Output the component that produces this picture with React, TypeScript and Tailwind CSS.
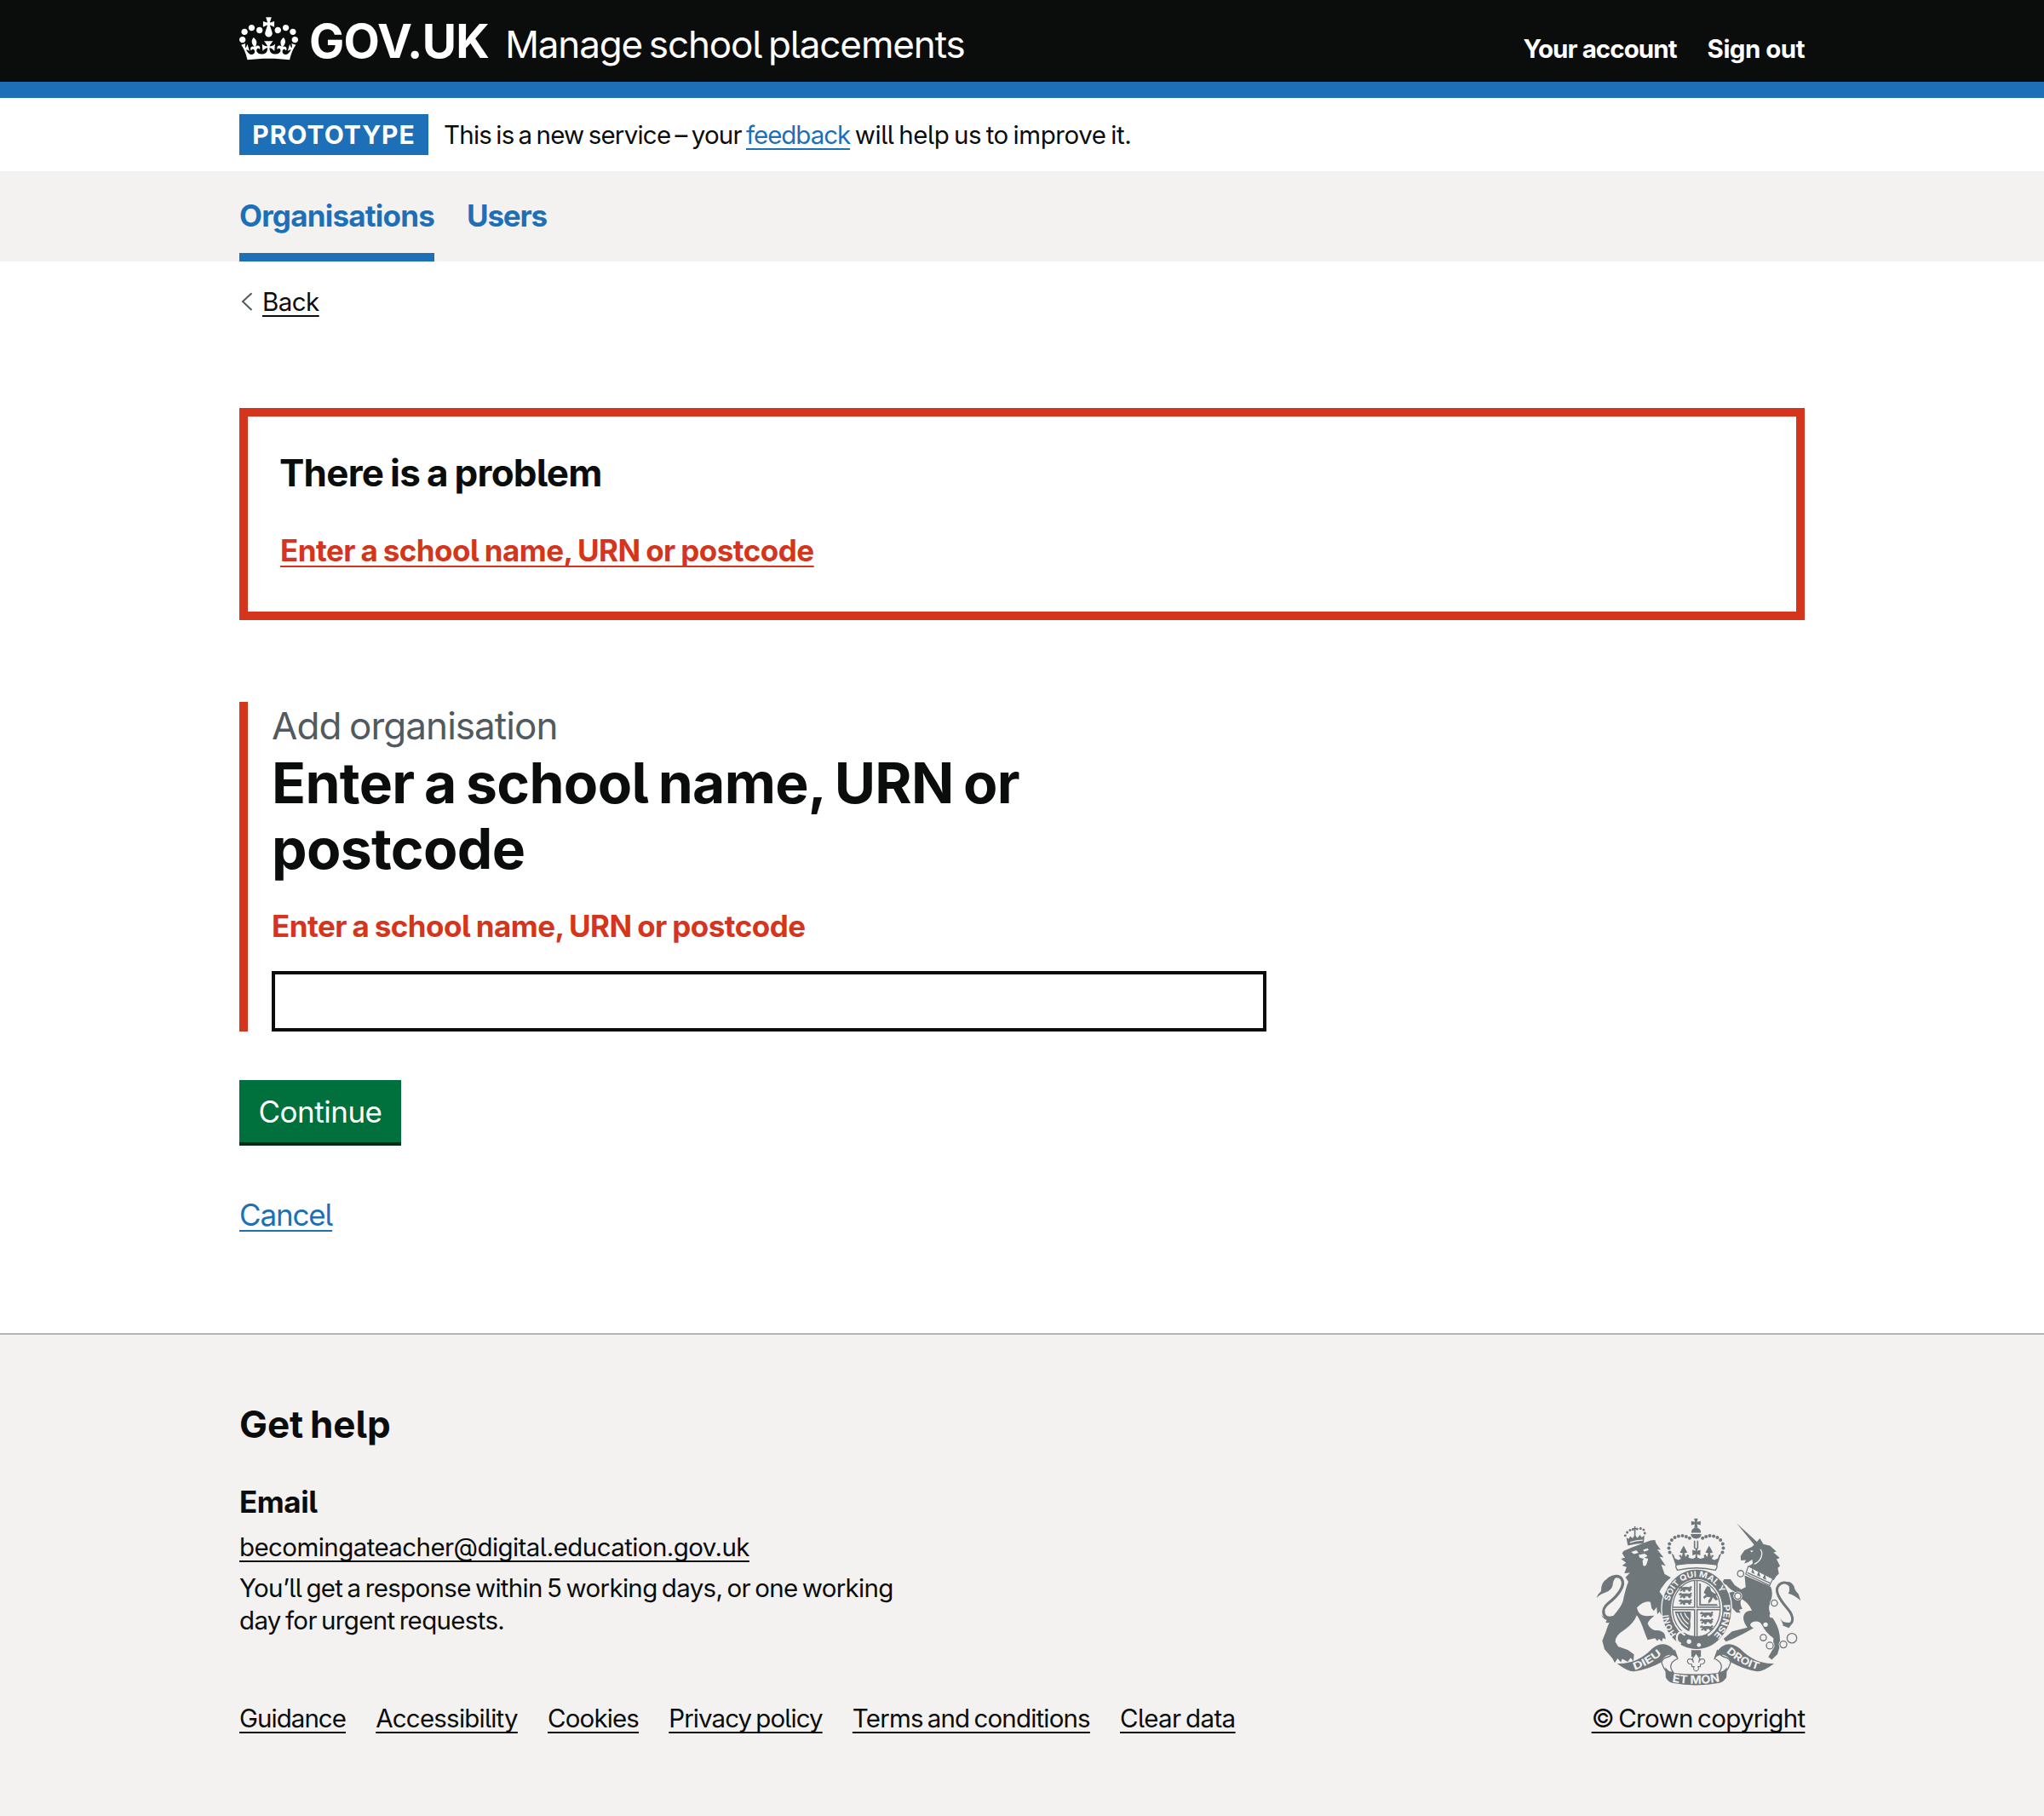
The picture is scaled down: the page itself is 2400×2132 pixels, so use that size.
const linkLine = "underline decoration-2 underline-offset-[5px] [text-decoration-skip-ink:none]";

function Crown() {
  return (
    <svg viewBox="0 0 132 97" className="h-[51px] w-[69px] shrink-0" fill="currentColor" aria-hidden="true">
      <path
        fillRule="evenodd"
        d="M25 30.2c3.5 1.5 7.7-.2 9.1-3.7 1.5-3.6-.2-7.8-3.9-9.2-3.6-1.4-7.6.3-9.1 3.9-1.4 3.5.3 7.5 3.9 9zM9 39.5c3.6 1.5 7.8-.2 9.2-3.7 1.5-3.6-.2-7.8-3.9-9.1-3.6-1.5-7.6.2-9.1 3.8-1.4 3.5.3 7.5 3.8 9zM4.4 57.2c3.5 1.5 7.7-.2 9.1-3.8 1.5-3.6-.2-7.7-3.9-9.1-3.5-1.5-7.6.3-9.1 3.8-1.4 3.5.3 7.6 3.9 9.1zm38.3-21.4c3.5 1.5 7.7-.2 9.1-3.8 1.5-3.6-.2-7.7-3.9-9.1-3.6-1.5-7.6.3-9.1 3.8-1.3 3.6.4 7.7 3.9 9.1zm64.4-5.6c-3.6 1.5-7.8-.2-9.1-3.7-1.5-3.6.2-7.8 3.8-9.2 3.6-1.4 7.7.3 9.2 3.9 1.3 3.5-.4 7.5-3.9 9zm15.9 9.3c-3.6 1.5-7.7-.2-9.1-3.7-1.5-3.6.2-7.8 3.7-9.1 3.6-1.5 7.7.2 9.2 3.8 1.5 3.5-.3 7.5-3.8 9zm4.7 17.7c-3.6 1.5-7.8-.2-9.2-3.8-1.5-3.6.2-7.7 3.9-9.1 3.6-1.5 7.7.3 9.2 3.8 1.3 3.5-.4 7.6-3.9 9.1zM89.3 35.8c-3.6 1.5-7.8-.2-9.2-3.8-1.4-3.6.2-7.7 3.9-9.1 3.6-1.5 7.7.3 9.2 3.8 1.4 3.6-.3 7.7-3.9 9.1zM69.7 17.7l8.9 4.7V9.3l-8.9 2.8c-.2-.3-.5-.6-.9-.9L72.4 0H59.6l3.5 11.2c-.3.3-.6.5-.9.9l-8.8-2.8v13.1l8.8-4.7c.3.3.6.7.9.9l-5 15.4v.1c-.2.8-.4 1.6-.4 2.4 0 4.1 3.1 7.5 7 8.1h.2c.3 0 .7.1 1 .1.4 0 .7 0 1-.1h.2c4-.6 7.1-4.1 7.1-8.1 0-.8-.1-1.7-.4-2.4V34l-5.1-15.4c.4-.2.7-.6 1-.9zM66 92.8c16.9 0 32.8 1.1 47.1 3.2 4-16.9 8.9-26.7 14-33.5l-9.6-3.4c1 4.9 1.1 7.2 0 10.2-1.5-1.4-3-4.3-4.2-8.7L108.6 76c2.8-2 5-3.2 7.5-3.3-4.4 9.4-10 11.9-13.6 11.2-4.3-.8-6.3-4.6-5.6-7.9 1-4.7 5.7-5.9 8-.5 4.3-8.7-3-11.4-7.6-8.8 7.1-7.2 7.9-13.5 2.1-21.1-8 6.1-8.1 12.3-4.5 20.8-4.7-5.4-12.1-2.5-9.5 6.2 3.4-5.2 7.9-2 7.2 3.1-.6 4.3-6.4 7.8-13.5 7.2-10.3-.9-10.9-8-11.2-13.8 2.5-.5 7.1 1.8 11 7.3L80.2 60c-4.1 4.4-8 5.3-12.3 5.4 1.4-4.4 8-11.6 8-11.6H55.5s6.4 7.2 7.9 11.6c-4.2-.1-8-1-12.3-5.4l1.4 16.4c3.9-5.5 8.5-7.7 10.9-7.3-.3 5.8-.9 12.8-11.1 13.8-7.2.6-12.9-2.9-13.5-7.2-.7-5 3.8-8.3 7.1-3.1 2.7-8.7-4.6-11.6-9.4-6.2 3.7-8.5 3.6-14.7-4.6-20.8-5.8 7.6-5 13.9 2.2 21.1-4.7-2.6-11.9.1-7.7 8.8 2.3-5.5 7.1-4.2 8.1.5.7 3.3-1.3 7.1-5.7 7.9-3.5.7-9-1.8-13.5-11.2 2.5.1 4.7 1.3 7.5 3.3l-4.7-15.4c-1.2 4.4-2.7 7.2-4.3 8.7-1.1-3-.9-5.3 0-10.2l-9.5 3.4c5 6.9 9.9 16.7 14 33.5 14.8-2.1 30.8-3.2 47.7-3.2z"
      />
    </svg>
  );
}

const G = "#6f777b";
const L = "#f3f2f1";

const leftPearls = [
  [300, 157], [297, 142], [299, 127], [307, 114], [318, 105], [331, 100], [345, 99], [358, 102], [370, 107],
];

function LittleLion({ x, y }: { x: number; y: number }) {
  return (
    <path
      transform={`translate(${x} ${y})`}
      stroke={G}
      strokeWidth="2.5"
      d="M0 4l6-4 7 3 12-1 12 1 6-4 3 3-4 4 3 5-6-1 2 6h-6l-3-6-11 1 1 6h-6l-2-6-6 5-4-2 5-5-1-4-5 2z"
    />
  );
}

function RoyalArms() {
  return (
    <svg viewBox="40 36 724 594" className="h-[198px] w-[241px] [word-spacing:0]" fill={G} aria-hidden="true">
      <defs>
        <path id="motto-top" d="M299 334A98.2 114 0 0 1 491 334" />
        <path id="motto-right" d="M489 342A95 114 0 0 1 446 458" />
        <path id="motto-left" d="M324 446A97 116 0 0 1 296 374" />
        <path id="scroll-left" d="M176 572Q230 556 281 510" />
        <path id="scroll-right" d="M499 509Q549 555 617 573" />
        <path id="scroll-mid" d="M300 612Q393 630 488 611" />
      </defs>

      {/* left supporter */}
      <path d="M152 133l-5-28 8 5 6-10 8 8 8-12 9 10 9-10 6 8 10-6-3 27q-30 2-56 8z" />
      <path d="M160 122q22-7 45-8" stroke={L} strokeWidth="4" fill="none" />
      <path d="M177 66v34M170 74h14" stroke={G} strokeWidth="5" fill="none" />
      {[[143, 98], [150, 87], [160, 79], [170, 76], [185, 75], [197, 73], [208, 78], [212, 90]].map(([x, y]) => (
        <circle key={x} cx={x} cy={y} r="4.5" />
      ))}
      <path d="M138 152l28-12 66-25 16-1 4 12 16 22-12-1 22 28-14-2 22 32-16-5 12 34 22 12-16 14-18 24-6 12 24 34 12 44-10 8-14-16-4 16-8-16-8 10-2-26-10 14-8-10-4-22q-22-6-48 20 6 30 34 30l28-2q-22 18-24 28 8 20 26 24 26-2 34 14l4 18-10-5-4 13-10-10-6 8-8-10-26 6-10-25q-14-42-28-62-12 30-42 50-36 22-34 44l10 16 34 12 22 16-2 24-10-12-10 14-20-10-4 12-12-14-10 16-8-16-28-32-8-30 12-30q12-44 40-74 22-26 24-50 8-34 16-54l-10-16 16-16-20 2 8-22-16-5 14-10-18-14 14-4-10-16z" />
      <path d="M164 156l18-6 8 9-16 4zM206 148l16-5 4 6-16 6zM190 166l22-4 10 8-12 6 14 4-4 14q-6 18-14 8l-2-14 4-8-14-4z" fill={L} />
      <path d="M108 386C62 398 54 360 84 336C116 312 146 274 130 250C120 236 96 240 82 254" fill="none" stroke={G} strokeWidth="10" />
      <path d="M42 318q4-14 16-24-2-30 22-44 16-12 38-9-16 8-18 24 0 26-28 34-16 4-30 19zM58 376q8 14 24 10 12-4 24-6l-4 16q-12 14-28 8l4-8q-14-4-20-20z" />

      {/* right supporter */}
      <path d="M536 54l76 70-12 9z" />
      <path d="M550 170l14-20 26-12 14-14 14-16 12 20 24 6 22 20-10 3 22 20-11 4 12 24-8 7 4 20-10 10-8 14-92-48 18-12-2-14-14 10-14 4 6-12-18 2z" />
      <path d="M620 146q12 18-4 40-12 12-18 12" fill="none" stroke={L} strokeWidth="4" />
      <path d="M584 150l12 2-8 5z" fill={L} />
      <path d="M577 206l-9 28 84 40 12-24z" fill={L} stroke={G} strokeWidth="3.5" />
      <path d="M588 228l4-14 8 20zM608 238l6-16 6 22zM628 248l8-16 4 22z" />
      <path d="M574 229l80 37" stroke={G} strokeWidth="4" />
      <path d="M564 238l92 40q12 24-4 64-8 22 16 54 26 40 20 94l-8 26-20 20-12-10 16-28 2-38q-28-20-40-46-12-20-36-10-14 10 6 20l-36 20-40 20-22 8-8-10 30-26 54-14q-16-20-14-38 4-22 30-22-12-26-36-40-10 12 2 34l-12 4 6 10-14 0-30-32-10-34 26-8 18 6q-30-14-40-30l-16-6 8-14 22 0 16 22 22 14 16-8z" />
      <path d="M700 412C742 418 740 384 716 356C688 324 664 288 688 270C706 256 726 270 732 284" fill="none" stroke={G} strokeWidth="9" />
      <path d="M706 262q22-6 32 14 4 18 16 28l8 24q-20-20-44-26 6-6 4-18 0-12-16-22zM688 386q8 18 22 18l24 2-14 18-18-8z" />
      {[[550, 232, 11], [540, 311, 11], [669, 336, 11], [630, 458, 11], [653, 486, 12], [701, 482, 12], [731, 460, 17]].map(
        ([x, y, r]) => (
          <g key={x} fill={L}>
            <circle cx={x} cy={y} r={r} stroke={L} strokeWidth="9" />
            <circle cx={x} cy={y} r={r} stroke={G} strokeWidth="4" />
          </g>
        ),
      )}
      <circle cx="660" cy="380" r="8" fill={L} />
      <circle cx="638" cy="412" r="8" fill={L} />

      {/* crown */}
      <path d="M386 38h13l-3 12 13-3v14l-13-3 3 12h-13l3-12-13 3V47l13 3zM376 88q0-16 17-18 17 2 17 18z" />
      <path d="M374 93h38q-2 16-19 16t-19-16zM385 116h5v28h-5zM396 116h5v28h-5z" />
      {leftPearls.map(([x, y]) => (
        <g key={`${x}-${y}`}>
          <circle cx={x} cy={y} r="6" />
          <circle cx={786 - x} cy={y} r="6" />
        </g>
      ))}
      <path d="M306 160l8 6 4 12 12 6 10-4-8-12 8-2 2 8 4-14-10-2 8-16 5-8 5 8 8 16-10 2 4 14 6-10 6 4-2 8 14 4 10-4 2-12-12 4v-20l12 4-4-10h12l-4 10 12-4v20l-12-4 2 12 10 4 14-4-2-8 6-4 6 10 4-14-10-2 8-16 5-8 5 8 8 16-10 2 4 14 2-8 8 2-8 12 10 4 12-6 4-12 8-6-16 48H323z" />

      {/* garter */}
      <ellipse cx="395" cy="358" rx="124" ry="142" stroke={L} strokeWidth="4" />
      <ellipse cx="395" cy="358" rx="91" ry="107" fill={L} />
      <ellipse cx="394" cy="356" rx="84" ry="100" fill="none" stroke={G} strokeWidth="4" />
      <path d="M322 210q-3-8 8-10 64-8 130 0 10 3 6 11l-5 9q-66-16-134 0z" fill={L} stroke={G} strokeWidth="4" />
      <g fill={G}>
        {[278, 301, 324].map((y) => (
          <LittleLion key={y} x={332} y={y} />
        ))}
        {[368, 392, 416].map((y) => (
          <LittleLion key={y} x={407} y={y} />
        ))}
        <path d="M404 266l6 2v72h56l4 6h-66zM424 290l8-14 10 4 4 14 12 8 10 0-4 10 6 12-8 2-10-10-6 14-10 8 0-10 8-12-14-2-8 8-4-8 10-8-8-6z" />
        <path d="M318 366l56 0q2 20-2 34 4 20-4 36-36-16-50-70z" />
        <path d="M326 372q10 30 38 52M338 370q6 24 28 40M352 370q4 14 16 24" stroke={L} strokeWidth="4" fill="none" />
      </g>
      <path d="M311 355h166M392 257v198" stroke={G} strokeWidth="13" />
      <path d="M311 355h166M392 257v198" stroke={L} strokeWidth="4" />
      <g fill={L} fontFamily="Inter, sans-serif" fontWeight="700" fontSize="31">
        <text fontSize="29"><textPath href="#motto-top" startOffset="4" textLength="246" lengthAdjust="spacingAndGlyphs">SOIT QUI MAL Y</textPath></text>
        <text><textPath href="#motto-right" textLength="118" lengthAdjust="spacingAndGlyphs">PENSE</textPath></text>
        <text><textPath href="#motto-left" textLength="76" lengthAdjust="spacingAndGlyphs">HONI</textPath></text>
      </g>
      <path d="M352 438q-18-4-26 12-6 22 14 30" fill="none" stroke={L} strokeWidth="7" />
      <path d="M356 446q40 14 76 0l10 22q-46 22-100 4z" />
      <circle cx="368" cy="472" r="8" fill={L} />
      <circle cx="403" cy="484" r="7" fill={L} />

      {/* scroll */}
      <path d="M272 548q-2-16 22-22 14-4 24-22l10 28q-22 10-24 24-2 12 8 24h-22q-12-12-18-32zM514 548q2-16-22-22-14-4-24-22l-10 28q22 10 24 24 2 12-8 24h22q12-12 18-32z" fill={L} stroke={G} strokeWidth="4" />
      <path d="M114 549q70 4 124-52 18-16 40-16 40 4 52 58-8-22-34-20-22 6-26 26-46 26-96 32-20 2-60-28zM668 549q-66 4-120-52-18-16-40-16-40 4-52 58 8-22 34-20 22 6 26 26 46 26 92 32 20 2 60-28z" />
      <path d="M284 562q14 18 30 20 78 10 158 0 18-4 30-20l-2 36q-8 14-24 20-84 16-168 0-16-6-22-20z" />
      <path d="M376 502h34v24h-34z" />
      <path d="M393 512l13 20-4 14q4-16 18-12 8 8-2 16l-10 2v8h-8q6 12-7 16-13-4-7-16h-8v-8l-10-2q-10-8-2-16 14-4 18 12l-4-14z" fill={L} stroke={G} strokeWidth="3.5" />
      <g fill={L} fontFamily="Inter, sans-serif" fontWeight="700" fontSize="36">
        <text><textPath href="#scroll-left" textLength="112" lengthAdjust="spacingAndGlyphs">DIEU</textPath></text>
        <text><textPath href="#scroll-right" textLength="130" lengthAdjust="spacingAndGlyphs">DROIT</textPath></text>
        <text fontSize="40"><textPath href="#scroll-mid" startOffset="8" textLength="170" lengthAdjust="spacingAndGlyphs">ET MON</textPath></text>
      </g>
    </svg>
  );
}

const footerLinks = [
  { label: "Guidance", tracking: "tracking-[-0.0327em]" },
  { label: "Accessibility", tracking: "tracking-[-0.0265em]" },
  { label: "Cookies", tracking: "tracking-[-0.0292em]" },
  { label: "Privacy policy", tracking: "tracking-[-0.031em]" },
  { label: "Terms and conditions", tracking: "tracking-[-0.028em]" },
  { label: "Clear data", tracking: "tracking-[-0.0196em]" },
];

export default function App() {
  return (
    <div className="flex min-h-[2132px] flex-col bg-white font-['Inter',sans-serif] text-[29.5px] leading-[38px] text-[#0b0c0c] [font-feature-settings:'cv05'] [word-spacing:-0.08em]">
      <header className="h-[115px] border-b-[19px] border-[#1d70b8] bg-[#0b0c0c] text-white">
        <div className="mx-auto flex w-[1838px] pt-5">
          <Crown />
          <div className="flex grow items-baseline pt-2">
            <span className="ml-[13px] text-[55px] font-bold leading-10 tracking-[-0.013em]">GOV.UK</span>
            <span className="ml-[19px] text-[44px] leading-10 tracking-[-0.0258em] [word-spacing:-0.08em]">
              Manage school placements
            </span>
            <nav className="ml-auto flex gap-9 font-bold">
              <a className="tracking-[-0.0318em] [word-spacing:0]">Your account</a>
              <a className="tracking-[-0.0176em] [word-spacing:0]">Sign out</a>
            </nav>
          </div>
        </div>
      </header>

      <div className="mx-auto flex h-[86px] w-[1838px] items-center">
        <strong className="flex h-12 w-[222px] items-center justify-center bg-[#1d70b8] text-[30px] font-bold tracking-[0.034em] text-white">
          PROTOTYPE
        </strong>
        <span className="ml-[18px] whitespace-nowrap tracking-[-0.0262em]">
          This is a new service – your{" "}
          <a className={`tracking-[-0.0354em] text-[#1d70b8] ${linkLine}`}>feedback</a>
          <span className="tracking-[-0.0135em]"> will help us to improve it.</span>
        </span>
      </div>

      <nav className="h-[106px] bg-[#f3f2f1]">
        <div className="mx-auto flex h-full w-[1838px] gap-[38px] text-[35px] font-bold text-[#1d70b8]">
          <a className="flex items-center border-b-[10px] border-[#1d70b8] pt-2 tracking-[-0.0223em]">Organisations</a>
          <a className="flex items-center border-b-[10px] border-transparent pt-2 tracking-[-0.035em]">Users</a>
        </div>
      </nav>

      <main className="mx-auto w-[1838px]">
        <a className="mt-[28px] flex items-center">
          <svg viewBox="0 0 27 24" className="h-6 w-[27px]" fill="none" stroke="#505a5f" strokeWidth="2" aria-hidden="true">
            <path d="M14.5 2.2L4 12l10.500 10" />
          </svg>
          <span className={`tracking-[-0.0187em] ${linkLine}`}>Back</span>
        </a>

        <section className="mt-[106px] h-[249px] border-[10px] border-[#d4351c] px-[38px] pt-[41px]">
          <h2 className="-ml-px text-[44px] font-bold leading-[50px] tracking-[-0.0176em] [word-spacing:-0.04em]">
            There is a problem
          </h2>
          <a
            className={`mt-[47px] block w-fit text-[35px] font-bold tracking-[-0.0146em] text-[#d4351c] [word-spacing:-0.04em] ${linkLine}`}
          >
            Enter a school name, URN or postcode
          </a>
        </section>

        <form className="mt-24">
          <div className="h-[387px] border-l-[10px] border-[#d4351c] pl-7">
            <span className="block text-[44px] leading-[56px] tracking-[-0.0218em] text-[#505a5f] [word-spacing:-0.04em]">
              Add organisation
            </span>
            <h1 className="mt-px max-w-[1100px] text-[66px] font-bold leading-[76.6px] tracking-[-0.0105em] [word-spacing:-0.052em]">
              Enter a school name, URN or postcode
            </h1>
            <p className="mt-[34px] text-[35px] font-bold tracking-[-0.0146em] text-[#d4351c] [word-spacing:-0.04em]">
              Enter a school name, URN or postcode
            </p>
            <input className="mt-[34px] block h-[71px] w-[1168px] border-4 border-[#0b0c0c] px-2" />
          </div>
          <button
            type="button"
            className="mt-[57px] flex h-[77px] w-[190px] items-center justify-center border-b-4 border-[#002d18] bg-[#00703c] text-[35px] tracking-[-0.014em] text-white"
          >
            Continue
          </button>
          <a className={`mt-[62px] block w-fit text-[35px] tracking-[-0.0325em] text-[#1d70b8] ${linkLine}`}>Cancel</a>
        </form>
      </main>

      <footer className="mt-[120px] grow border-t-2 border-[#b1b4b6] bg-[#f3f2f1]">
        <div className="mx-auto flex w-[1838px] items-end justify-between pt-20">
          <div>
            <h2 className="text-[44px] font-bold leading-[50px] tracking-[-0.002em]">Get help</h2>
            <h3 className="mt-[47px] text-[35px] font-bold tracking-[-0.012em]">Email</h3>
            <a className={`mt-[15px] block w-fit tracking-[-0.0197em] ${linkLine}`}>becomingateacher@digital.education.gov.uk</a>
            <p className="mt-[10px] w-[780px] leading-[38.300px] tracking-[-0.023em]">
              You’ll get a response within 5 working days, or one working day for urgent requests.
            </p>
            <ul className="mt-[76px] flex gap-[35.200px]">
              {footerLinks.map((link) => (
                <li key={link.label}>
                  <a className={`${link.tracking} ${linkLine}`}>{link.label}</a>
                </li>
              ))}
            </ul>
          </div>
          <div className="flex w-[250px] flex-col items-center">
            <RoyalArms />
            <a className={`mt-[18px] whitespace-nowrap tracking-[-0.0229em] ${linkLine}`}>© Crown copyright</a>
          </div>
        </div>
      </footer>
    </div>
  );
}
